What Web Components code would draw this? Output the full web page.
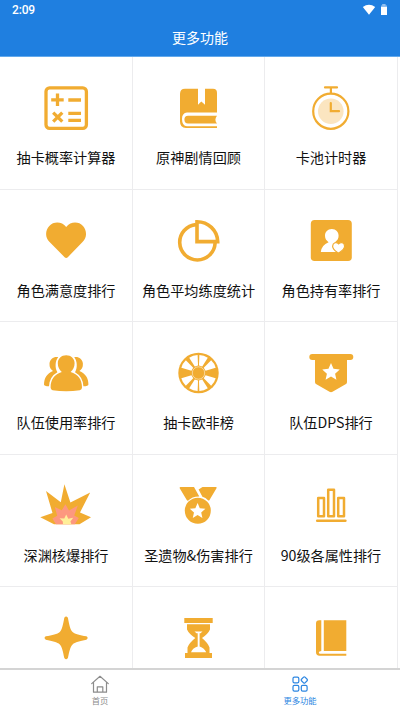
<!DOCTYPE html>
<html lang="zh-CN">
<head>
<meta charset="utf-8">
<title>更多功能</title>
<style>
html,body{margin:0;height:100%;background:#fff;overflow:hidden}
body{font-family:"Noto Sans CJK SC","Noto Sans",sans-serif}
</style>
</head>
<body>
<more-app></more-app>
<script>
const star = (cx, cy, R, r) => Array.from({length: 10}, (_, i) => {
  const a = -Math.PI / 2 + i * Math.PI / 5, q = i % 2 ? r : R;
  return (cx + q * Math.cos(a)).toFixed(2) + ',' + (cy + q * Math.sin(a)).toFixed(2);
}).join(' ');
const wedges = (cx, cy) => [31, 73, 107, 149, 211, 253, 287, 329].map(a =>
  `<path transform="rotate(${a} ${cx} ${cy})" fill="#fff" d="M${cx + 7.2} ${cy - 1.7}L${cx + 17.4} ${cy - 4.4}Q${cx + 18.7} ${cy} ${cx + 17.4} ${cy + 4.4}L${cx + 7.2} ${cy + 1.7}Z"/>`).join('');

/* Each icon: [viewBox origin x, origin y, markup]; every box is 60 units square. */
const ICONS = {
  calc: [36, 78, `<g fill="none" stroke="currentColor" stroke-width="3.3"><rect x="46" y="87.9" width="40.4" height="40.4" rx="3.6"/><path d="M51.2 99.8H63.7M57.5 93.5V106M68.3 100H81M53.2 112.6L62.3 121.6M62.3 112.6L53.2 121.6M68.3 113.3H81M68.3 120.4H81"/></g>`],
  story: [169, 78, `<path fill="currentColor" d="M185 88.8H198V104.8L201.3 101.5L205 104.8V88.8H213Q217 88.8 217 93V112.5H187Q182 113 182 119Q182 126 187 126.2H217V128H186Q180 128 180 121.5V94Q180 88.8 185 88.8Z"/><path fill="currentColor" d="M188 115.7H217Q213.8 119.6 217 123.6H188Q184.4 123.4 184.4 119.6Q184.4 115.9 188 115.7Z"/>`],
  timer: [301, 78, `<circle cx="330.8" cy="111.2" r="12.8" fill="#fbe5c0"/><g fill="none" stroke="currentColor" stroke-width="2.2" stroke-linecap="round"><circle cx="330.8" cy="111.2" r="17.6"/><path d="M325 87.4H337M330.9 88V93M330.8 103V111.2H339"/></g>`],
  heart: [36, 211, `<path fill="currentColor" d="M66.2 227C70.5 221.3 78.8 221.3 83 226C87 230.6 87.2 237.6 82.5 242L67.8 257.2Q66.2 258.8 64.6 257.2L49.6 242C45 237.5 45 230.6 49.3 226C53.6 221.3 61.8 221.3 66.2 227Z"/>`],
  pie: [168.5, 211, `<g fill="none" stroke="currentColor" stroke-width="3.6"><path d="M195.5 224.6A17.7 17.7 0 1 0 214.6 243"/><path d="M196.5 221.7V241.6H217.2A20.5 20.5 0 0 0 196.5 221.7Z"/></g>`],
  owner: [301, 211, `<rect x="310.8" y="220" width="41" height="41" rx="3.8" fill="currentColor"/><g fill="#fff"><path d="M331.8 229C336 229 338.6 232 338.6 235.7C338.6 238.5 337.3 240.4 335 242.2Q338 243.5 340.8 245V252H320.8Q321.5 245 328.6 242.2C326.3 240.4 325 238.5 325 235.7C325 232 327.6 229 331.8 229Z"/><path stroke="#f1ac31" stroke-width="1.2" d="M338.6 243.9C340.8 241.5 344.5 242.6 344.6 246.2C344.5 249.6 340.8 251.5 338.6 253.2C336.3 251.5 332.6 249.6 332.6 246.2C332.8 242.6 336.5 241.5 338.6 243.9Z"/></g>`],
  team: [36, 343, `<g fill="currentColor"><path d="M58.2 357.2C54 356.3 50 358.8 49.5 363.5C49.2 367.5 51 369.6 53 371C47 373.5 44 378 44 384.5Q44 386.3 49 386.3Q49.5 376.5 57.4 372.2C54.8 368 55 361 58.2 357.2ZM74.2 357.2C78.4 356.3 82.4 358.8 82.9 363.5C83.2 367.5 81.4 369.6 79.4 371C85.4 373.5 88.4 378 88.4 384.5Q88.4 386.3 83.4 386.3Q82.9 376.5 75 372.2C77.6 368 77.4 361 74.2 357.2Z"/><path d="M66.2 355.2C71 355.2 74.6 358.7 74.6 363.2C74.6 367 73 370 70.6 371.9C78 374.2 82 379 82 387.5Q82 389.7 79.8 390.2Q66.2 392.2 52.6 390.2Q50.6 389.7 50.6 387.5C50.6 379 54.6 374.2 61.8 371.9C59.4 370 57.8 367 57.8 363.2C57.8 358.7 61.4 355.2 66.2 355.2Z"/></g>`],
  wheel: [168.5, 343, `<circle cx="198" cy="373" r="20.2" fill="currentColor"/>${wedges(198, 373)}<circle cx="198" cy="373" r="6.2" fill="none" stroke="#fff" stroke-width=".5"/>`],
  banner: [301, 343, `<path fill="currentColor" d="M312.3 354H350.3A3 3 0 0 1 350.3 360H347V382Q347 383.3 346 384L332.5 391.7Q331 392.6 329.5 391.7L316 384Q315 383.3 315 382V360H312.3A3 3 0 0 1 312.3 354Z"/><polygon fill="#fff" points="${star(331, 372.3, 9.2, 4.3)}"/>`],
  blast: [36, 476, `<path fill="currentColor" d="M54 524.2L40.3 517.2L52.5 513L46 491L60.8 502.3L64.4 484.2L70.4 502.5L90.2 492.5L80 512.5L91 517.2L79.5 524.2Z"/><path fill="#fd987f" d="M56 524.2L52.4 518.5L57.2 515.8L54.8 507L61.8 510.3L65.4 504.3L69 510.5L77.8 505.6L74.2 515.4L78.8 518L74.8 524.2Z"/><path fill="#ffef99" d="M63 524.2L62.8 521.5L59.6 518.2L64.3 518.6L66.2 514.6L68.3 518.8L73.2 517.8L70.4 521.5L71.4 524.2Z"/>`],
  medal: [169, 476, `<g fill="currentColor"><path d="M180.6 487H194L199.3 496.4Q192.3 496.2 188 500.8Q187 500.5 186.6 499.7L179.7 488.3Q179.3 487 180.6 487ZM202.5 487H215.8Q217.2 487 216.5 488.3L209.5 500Q209 501 208 500.3Q205.7 497.6 202.4 496.7L198.6 489.6Z"/><circle cx="197.8" cy="510.7" r="13"/></g><polygon fill="#fff" points="${star(197.6, 511.3, 8.2, 3.8)}"/>`],
  bars: [301, 476, `<g fill="none" stroke="currentColor" stroke-width="2.5" stroke-linejoin="round"><path d="M318.2 498H324V516.2H318.2ZM328.2 489.8H334V516.2H328.2ZM338.2 498H344V516.2H338.2Z"/><path stroke-linecap="round" d="M317.2 520.7H345.4"/></g>`],
  spark: [36, 608, `<path fill="currentColor" d="M64.3 617.8Q66.1 615.3 67.9 617.8C69.2 624.3 70.1 630 72.6 631.9C75 634.2 80 635 86.4 636.3Q88.9 638 86.4 639.8C80 641.2 75 642.2 72.6 644.4C70.1 646.6 69.2 652 67.9 658Q66.1 660.7 64.3 658C63.1 652 62.1 646.6 59.8 644.4C57.4 642.2 52.3 641.2 45.8 639.8Q43.3 638 45.8 636.3C52.3 635 57.4 634.2 59.8 631.9C62.1 630 63.1 624.3 64.3 617.8Z"/>`],
  sand: [169, 608, `<path fill="currentColor" d="M184.3 618H212.7V623H184.3ZM187 624.2H210V629.5Q208 634 202 638Q208 643 209.5 647.5V653H212V658H185V653H187.5V647.5Q189 643 195.3 638Q189 634 187 629.5Z"/><path fill="#fff" d="M194.5 631.5H202.5L200.5 633.2H199.6V646.5Q204.5 648.3 206.2 652.3H191Q192.3 648.3 197.7 646.5V633.2H196.5Z"/>`],
  book: [301, 608, `<path fill="currentColor" d="M323.8 620.3H346.3V651H323.8ZM321.3 620.3V651Q318.8 651.1 318.8 652.4Q318.8 653.8 320.3 653.8H346.3V655.7H319.5Q316 655.7 316 652.3V623.5Q316 620.3 319.3 620.3Z"/>`]
};

function define(name, css, html) {
  customElements.define(name, class extends HTMLElement {
    connectedCallback() {
      if (this.shadowRoot) return;
      const t = document.createElement('template');
      t.innerHTML = `<style>${css}</style>${typeof html === 'function' ? html(this) : html}`;
      this.attachShadow({mode: 'open'}).append(t.content.cloneNode(true));
    }
  });
}

define('feature-icon', ':host{display:block;width:60px;height:60px;color:#f1ac31}svg{display:block}', el => {
  const [x, y, body] = ICONS[el.getAttribute('name')];
  return `<svg width="60" height="60" viewBox="${x} ${y} 60 60">${body}</svg>`;
});

define('feature-cell', `
:host{display:flex;flex-direction:column;align-items:center;box-sizing:border-box;padding-top:21px;
 border-right:1px solid #ececee;border-bottom:1px solid #ececee;min-width:0}
span{font-size:14.15px;line-height:20px;margin:9px 0 0;white-space:nowrap;color:#111}`,
  el => `<feature-icon name="${el.getAttribute('icon')}"></feature-icon><span><slot></slot></span>`);

define('feature-grid', `
:host{display:grid;grid-template-columns:133px 132px 133px;grid-template-rows:133px 132px 133px 132px 133px;overflow:hidden;background:#fff}`,
  '<slot></slot>');

define('status-bar', `
:host{display:flex;align-items:center;justify-content:space-between;height:20px;padding:0 12px 0 12px;
 font:500 12px/21px Roboto,sans-serif;letter-spacing:-.15px;color:#fff}
svg{display:block}`, `<span>2:09</span>
<svg width="26" height="12" viewBox="0 0 26 12" fill="#fff"><path d="M.8 3Q7 -1.3 13.2 3L7 10.8Z"/><path opacity=".5" d="M20.2 0H23.6V1.6H25V3H19V1.6H20.2Z"/><path d="M19 3H25V11H19Z"/></svg>`);

define('title-bar', `
:host{display:flex;flex-direction:column;box-sizing:border-box;height:57px;background:#1f7fe0;border-bottom:1px solid #62a9ec}
h1{margin:7px 0 0;font-size:14px;line-height:20px;font-weight:400;color:#fff;text-align:center}`,
  '<status-bar></status-bar><h1><slot></slot></h1>');

define('nav-tab', `
:host{flex:1;display:flex;flex-direction:column;align-items:center;padding-top:4px;color:#8c8c8c}
:host([active]){color:#2c86e2}
svg{display:block}
span{font-size:8.3px;line-height:12px}`, el => `
<svg width="20" height="20" viewBox="0 0 20 20" fill="none" stroke="currentColor" stroke-width="1.2" stroke-linejoin="round" stroke-linecap="round">${el.hasAttribute('active')
  ? '<rect x="3" y="3.1" width="5.8" height="5.8" rx="1.4"/><rect x="3" y="11.3" width="5.8" height="5.8" rx="1.4"/><rect x="11.3" y="11.3" width="5.8" height="5.8" rx="1.4"/><rect x="11.8" y="3.5" width="5" height="5" rx="1" transform="rotate(45 14.3 6)"/>'
  : '<path d="M1.7 9.6L10 2.3L18.3 9.6M3.5 8.2V18.2H16.5V8.2M7.3 18V12.8H12.8V18"/>'}</svg><span><slot></slot></span>`);

define('tab-bar', ':host{display:flex;box-sizing:border-box;height:43px;background:#fff;border-top:2px solid #d4d4d4}', '<slot></slot>');

const labels = [['calc','抽卡概率计算器'],['story','原神剧情回顾'],['timer','卡池计时器'],['heart','角色满意度排行'],['pie','角色平均练度统计'],['owner','角色持有率排行'],['team','队伍使用率排行'],['wheel','抽卡欧非榜'],['banner','队伍DPS排行'],['blast','深渊核爆排行'],['medal','圣遗物&amp;伤害排行'],['bars','90级各属性排行'],['spark',''],['sand',''],['book','']];

define('more-app', `
:host{display:flex;flex-direction:column;height:711px;width:400px;overflow:hidden}
title-bar,tab-bar{flex:none}
feature-grid{flex:1;min-height:0}`, `
<title-bar>更多功能</title-bar>
<feature-grid>${labels.map(([i, t]) => `<feature-cell icon="${i}">${t}</feature-cell>`).join('')}</feature-grid>
<tab-bar><nav-tab>首页</nav-tab><nav-tab active>更多功能</nav-tab></tab-bar>`);
</script>
</body>
</html>
